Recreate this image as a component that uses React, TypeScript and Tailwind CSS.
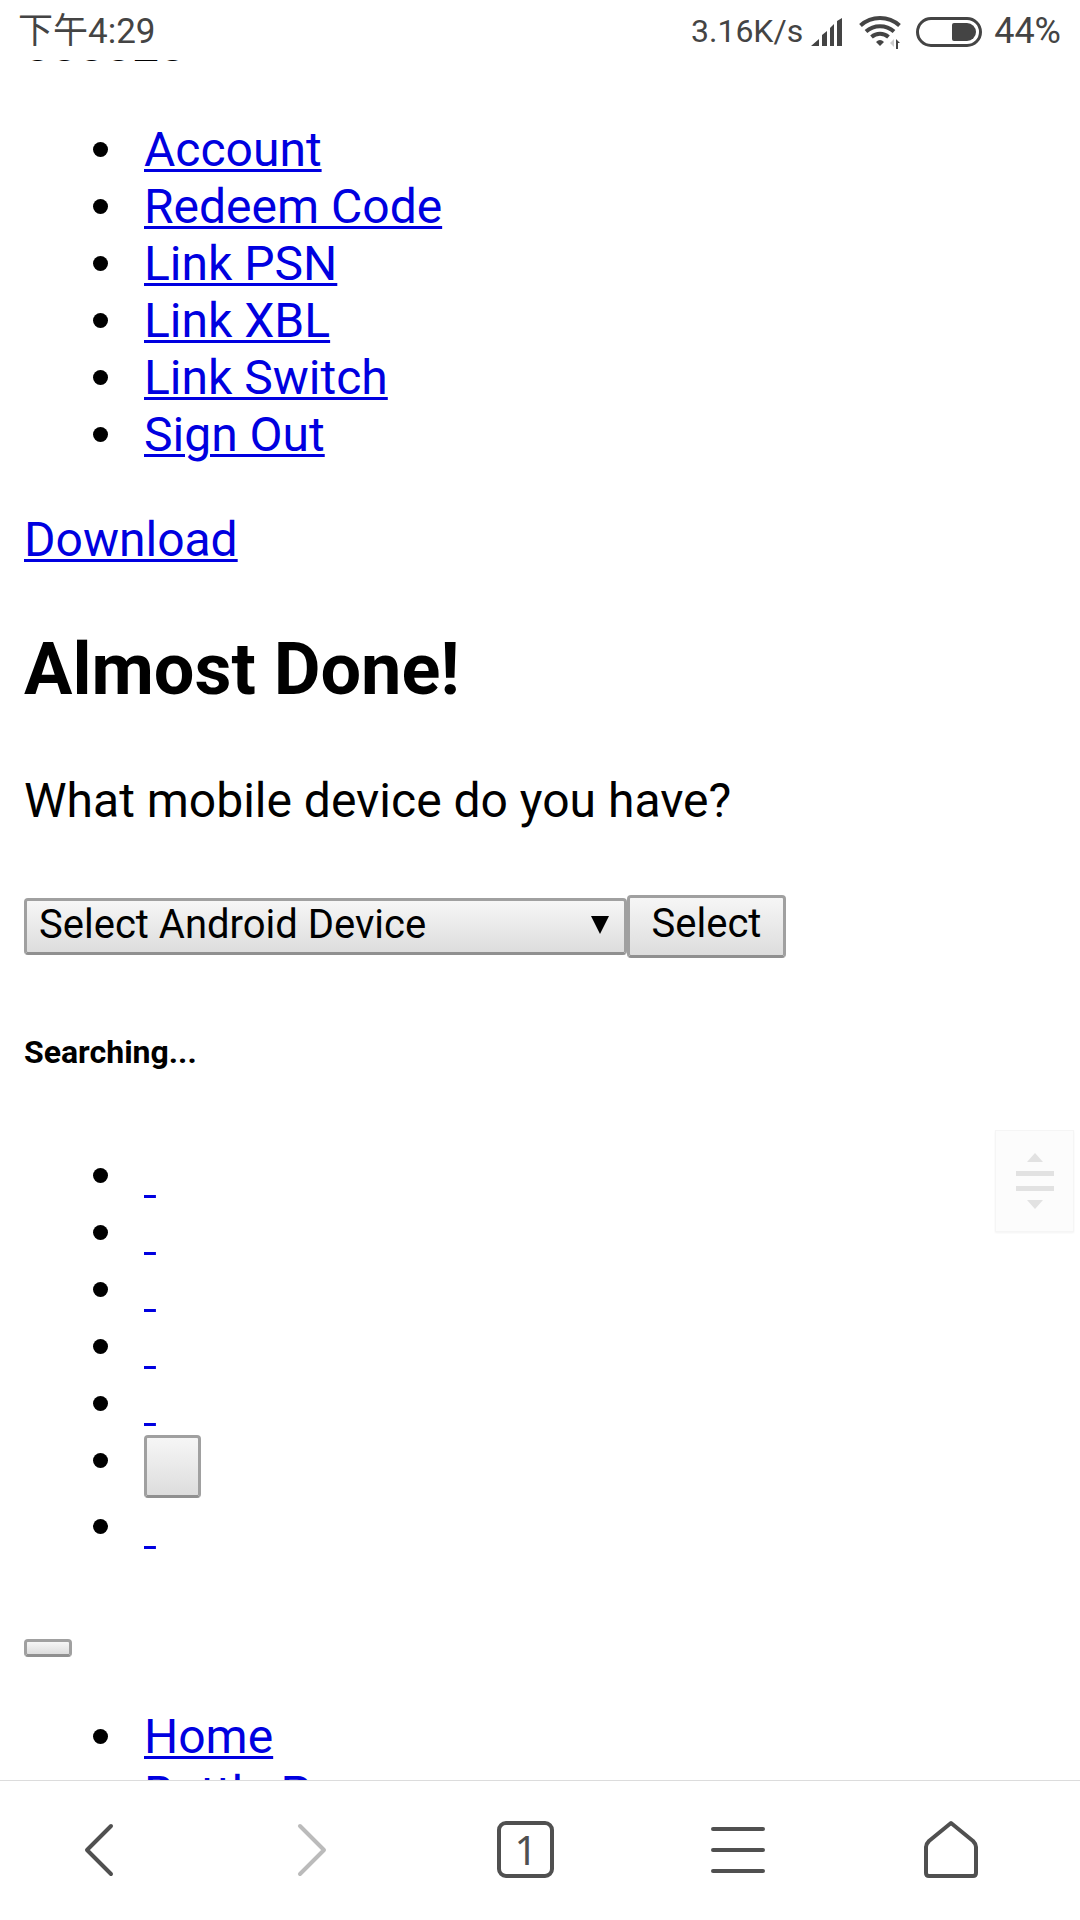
import type { ReactNode } from 'react';

const ACCOUNT_LINKS = ['Account', 'Redeem Code', 'Link PSN', 'Link XBL', 'Link Switch', 'Sign Out'];

const CONTROL =
  'rounded-[4px] border-[3px] border-[#a0a0a0] border-b-[#909090] bg-linear-to-b from-[#f6f6f6] to-[#dddddd] text-[40px] leading-[47px] text-black';

function PageLink({ children }: { children: ReactNode }) {
  return (
    <a href="#" className="text-[#0000e0] underline decoration-[3px] underline-offset-[3px]">
      {children}
    </a>
  );
}

function Item({ children }: { children: ReactNode }) {
  return (
    <li className="relative flow-root">
      <span className="absolute top-[21px] -left-[51px] size-[15px] rounded-full bg-black" />
      {children}
    </li>
  );
}

function StatusBar() {
  return (
    <header className="relative z-10 flex h-[60px] shrink-0 items-center justify-between bg-white pt-[3px] pr-[19px] pl-[18px] text-[35px] leading-[57px] text-[#444]">
      <span>下午4:29</span>
      <div className="flex items-center">
        <span className="text-[32px]">3.16K/s</span>
        <svg viewBox="0 0 32 28" className="ml-2 h-7 w-8" fill="currentColor" aria-hidden="true">
          <path d="M0 28 8 21V28ZM11 17 16 13V28H11ZM19 10 23 6V28H19ZM26 3 31 0V28H26Z" />
        </svg>
        <svg viewBox="0 0 42 34" className="ml-4 h-[34px] w-[42px]" fill="none" stroke="currentColor" strokeWidth="4" aria-hidden="true">
          <path d="M1.500 10.500A29 29 0 0 1 40.500 10.500M7 16.500A21 21 0 0 1 35 16.500M12.500 22A13 13 0 0 1 29.500 22" />
          <path d="M17 27Q21 23 25 27L21 31Z" fill="currentColor" stroke="none" />
          <path d="M35 24V32L31 28Z" fill="#ccc" stroke="none" />
          <path d="M37 24 41 28H39V34H37Z" fill="currentColor" stroke="none" />
        </svg>
        <svg viewBox="0 0 66 30" className="ml-[15px] h-[30px] w-[66px]" aria-hidden="true">
          <rect x="1.500" y="1.500" width="63" height="27" rx="13.500" fill="none" stroke="currentColor" strokeWidth="3" />
          <path d="M38 6H51A9 9 0 0 1 51 24H38Q36 24 36 22V8Q36 6 38 6Z" fill="currentColor" />
        </svg>
        <span className="ml-3 text-[36px]">44%</span>
      </div>
    </header>
  );
}

function ScrollHandle() {
  return (
    <button
      type="button"
      aria-label="Scroll page"
      className="absolute top-[1130px] right-[6px] flex h-[102px] w-[79px] items-center justify-center border border-[#f5f5f5] bg-[#fcfcfc] shadow-xs"
    >
      <svg viewBox="0 0 38 56" className="h-14 w-[38px]" fill="#e2e2e2" aria-hidden="true">
        <path d="M19 0 27 9H11ZM0 18H38V23H0ZM0 33H38V38H0ZM11 47H27L19 56Z" />
      </svg>
    </button>
  );
}

function NavButton({ label, muted, children }: { label: string; muted?: boolean; children: ReactNode }) {
  return (
    <button type="button" aria-label={label} className={muted ? 'text-[#bbb]' : 'text-[#505050]'}>
      <svg
        viewBox="0 0 60 60"
        className="size-[60px]"
        fill="none"
        stroke="currentColor"
        strokeWidth="4"
        strokeLinecap="round"
        strokeLinejoin="round"
        aria-hidden="true"
      >
        {children}
      </svg>
    </button>
  );
}

function BrowserBar() {
  return (
    <nav className="relative z-10 flex h-[140px] shrink-0 items-center justify-between border-t border-[#dcdcdc] bg-white pr-[99px] pb-[2px] pl-[69px]">
      <NavButton label="Back">
        <path d="M42 6 18 30 42 54" />
      </NavButton>
      <NavButton label="Forward" muted>
        <path d="M18 6 42 30 18 54" />
      </NavButton>
      <button
        type="button"
        aria-label="Tabs"
        className="mx-[2px] flex size-[57px] items-center justify-center rounded-[9px] border-4 border-[#505050] pl-[2px] font-[Noto_Sans] text-[40px] leading-[48px] text-[#505050]"
      >
        1
      </button>
      <NavButton label="Menu">
        <path d="M5 9H55M5 30H55M5 51H55" />
      </NavButton>
      <NavButton label="Home">
        <path d="M30 3 52 21Q55 24 55 27V53Q55 56 52 56H8Q5 56 5 53V27Q5 24 8 21Z" />
      </NavButton>
    </nav>
  );
}

export default function App() {
  return (
    <div className="relative flex h-screen flex-col overflow-hidden bg-white font-[Roboto,'Noto_Sans_CJK_SC',sans-serif] text-black">
      <StatusBar />

      {/* page is scrolled, so the first line sits mostly under the status bar */}
      <main className="-mt-11 min-h-0 flex-1 overflow-hidden px-6 text-[48px] leading-[57px]">
        <p>888828</p>

        <ul className="mt-12 pl-[120px]">
          {ACCOUNT_LINKS.map((name) => (
            <Item key={name}>
              <PageLink>{name}</PageLink>
            </Item>
          ))}
        </ul>

        <p className="mt-12">
          <PageLink>Download</PageLink>
        </p>

        <h2 className="mt-[60px] text-[72px] leading-[84px] font-bold">Almost Done!</h2>
        <p className="mt-[60px]">
          <label htmlFor="device">What mobile device do you have?</label>
        </p>

        <form className="mt-[66px] flex items-center" onSubmit={(e) => e.preventDefault()}>
          <div className="relative">
            <select id="device" className={`${CONTROL} block h-[57px] w-[603px] appearance-none pb-[6px] pl-3`}>
              <option>Select Android Device</option>
            </select>
            <svg viewBox="0 0 18 18" className="pointer-events-none absolute top-[18px] right-[18px] size-[18px]" aria-hidden="true">
              <path d="M0 0H18L9 18Z" />
            </svg>
          </div>
          <button type="submit" className={`${CONTROL} h-[63px] w-[159px] pb-[6px]`}>
            Select
          </button>
        </form>

        <h6 className="mt-[75px] text-[32px] leading-[38px] font-bold">Searching...</h6>

        <ul className="mt-[76px] pl-[120px]">
          {[1, 2, 3, 4, 5].map((n) => (
            <Item key={n}>
              <PageLink>&nbsp;</PageLink>
            </Item>
          ))}
          <Item>
            <button type="button" aria-label="Search" className={`${CONTROL} mt-[3px] block h-[63px] w-[57px]`} />
          </Item>
          <Item>
            <PageLink>&nbsp;</PageLink>
          </Item>
        </ul>

        <button type="button" aria-label="Toggle navigation" className={`${CONTROL} mt-[84px] block h-[18px] w-12`} />

        <ul className="mt-[51px] pl-[120px]">
          <Item>
            <PageLink>Home</PageLink>
          </Item>
          <Item>
            <PageLink>Battle Pass</PageLink>
          </Item>
        </ul>
      </main>

      <ScrollHandle />
      <BrowserBar />
    </div>
  );
}
